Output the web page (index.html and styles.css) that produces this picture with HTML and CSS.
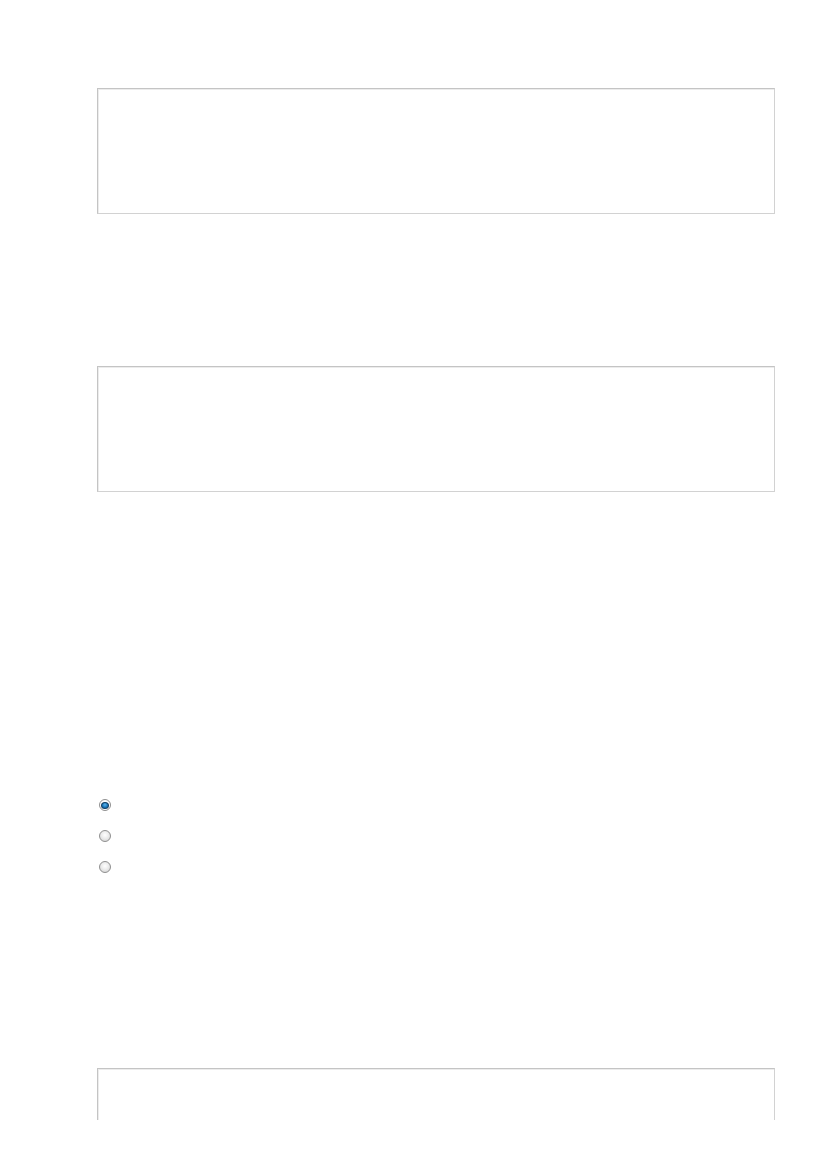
FILE: index.html
```html
<!DOCTYPE html>
<html lang="en">
<head>
<meta charset="utf-8">
<title>Form</title>
<link rel="stylesheet" href="styles.css">
</head>
<body>
<div class="page">
  <div class="content">
    <div class="field-box"></div>
    <div class="field-box second"></div>
    <div class="radio-group">
      <label class="radio-row"><input type="radio" name="opt" class="radio" checked></label>
      <label class="radio-row"><input type="radio" name="opt" class="radio"></label>
      <label class="radio-row"><input type="radio" name="opt" class="radio"></label>
    </div>
    <div class="field-box third"></div>
  </div>
</div>
</body>
</html>
```

FILE: styles.css
```css
html, body {
  margin: 0;
  padding: 0;
  background: #ffffff;
  font-family: "Liberation Sans", Arial, sans-serif;
}

.page {
  height: 1120px;
  overflow: hidden;
}

.content {
  display: flex;
  flex-direction: column;
  width: 678px;
  padding: 88px 0 0 97px;
}

.field-box {
  box-sizing: border-box;
  height: 126px;
  border: 1px solid #d2d2d2;
  border-top-color: #c4c4c4;
  border-left-color: #c4c4c4;
  box-shadow: inset 1px 1px 0 #ececec;
  background: #ffffff;
  flex: none;
}

.field-box.second {
  margin-top: 152px;
}

.field-box.third {
  margin-top: 195px;
  height: 200px;
}

.radio-group {
  display: flex;
  flex-direction: column;
  gap: 19px;
  margin-top: 307px;
  padding-left: 2px;
}

.radio-row {
  display: flex;
  align-items: center;
  height: 12px;
}

.radio {
  -webkit-appearance: none;
  appearance: none;
  box-sizing: border-box;
  width: 12px;
  height: 12px;
  margin: 0;
  border-radius: 50%;
  border: 1px solid #8f8f8f;
  background: radial-gradient(circle at 50% 40%, #ffffff 0%, #ececec 45%, #cdcdcd 100%);
  position: relative;
}

.radio:checked {
  background: #ffffff;
}

.radio:checked::after {
  content: "";
  position: absolute;
  left: 1px;
  top: 1.5px;
  width: 8px;
  height: 7px;
  box-sizing: border-box;
  border-radius: 50%;
  border: 1px solid #123f63;
  background: radial-gradient(circle at 50% 35%, #5fb4ea 0%, #1a78bd 55%, #0d4e80 100%);
}
```
